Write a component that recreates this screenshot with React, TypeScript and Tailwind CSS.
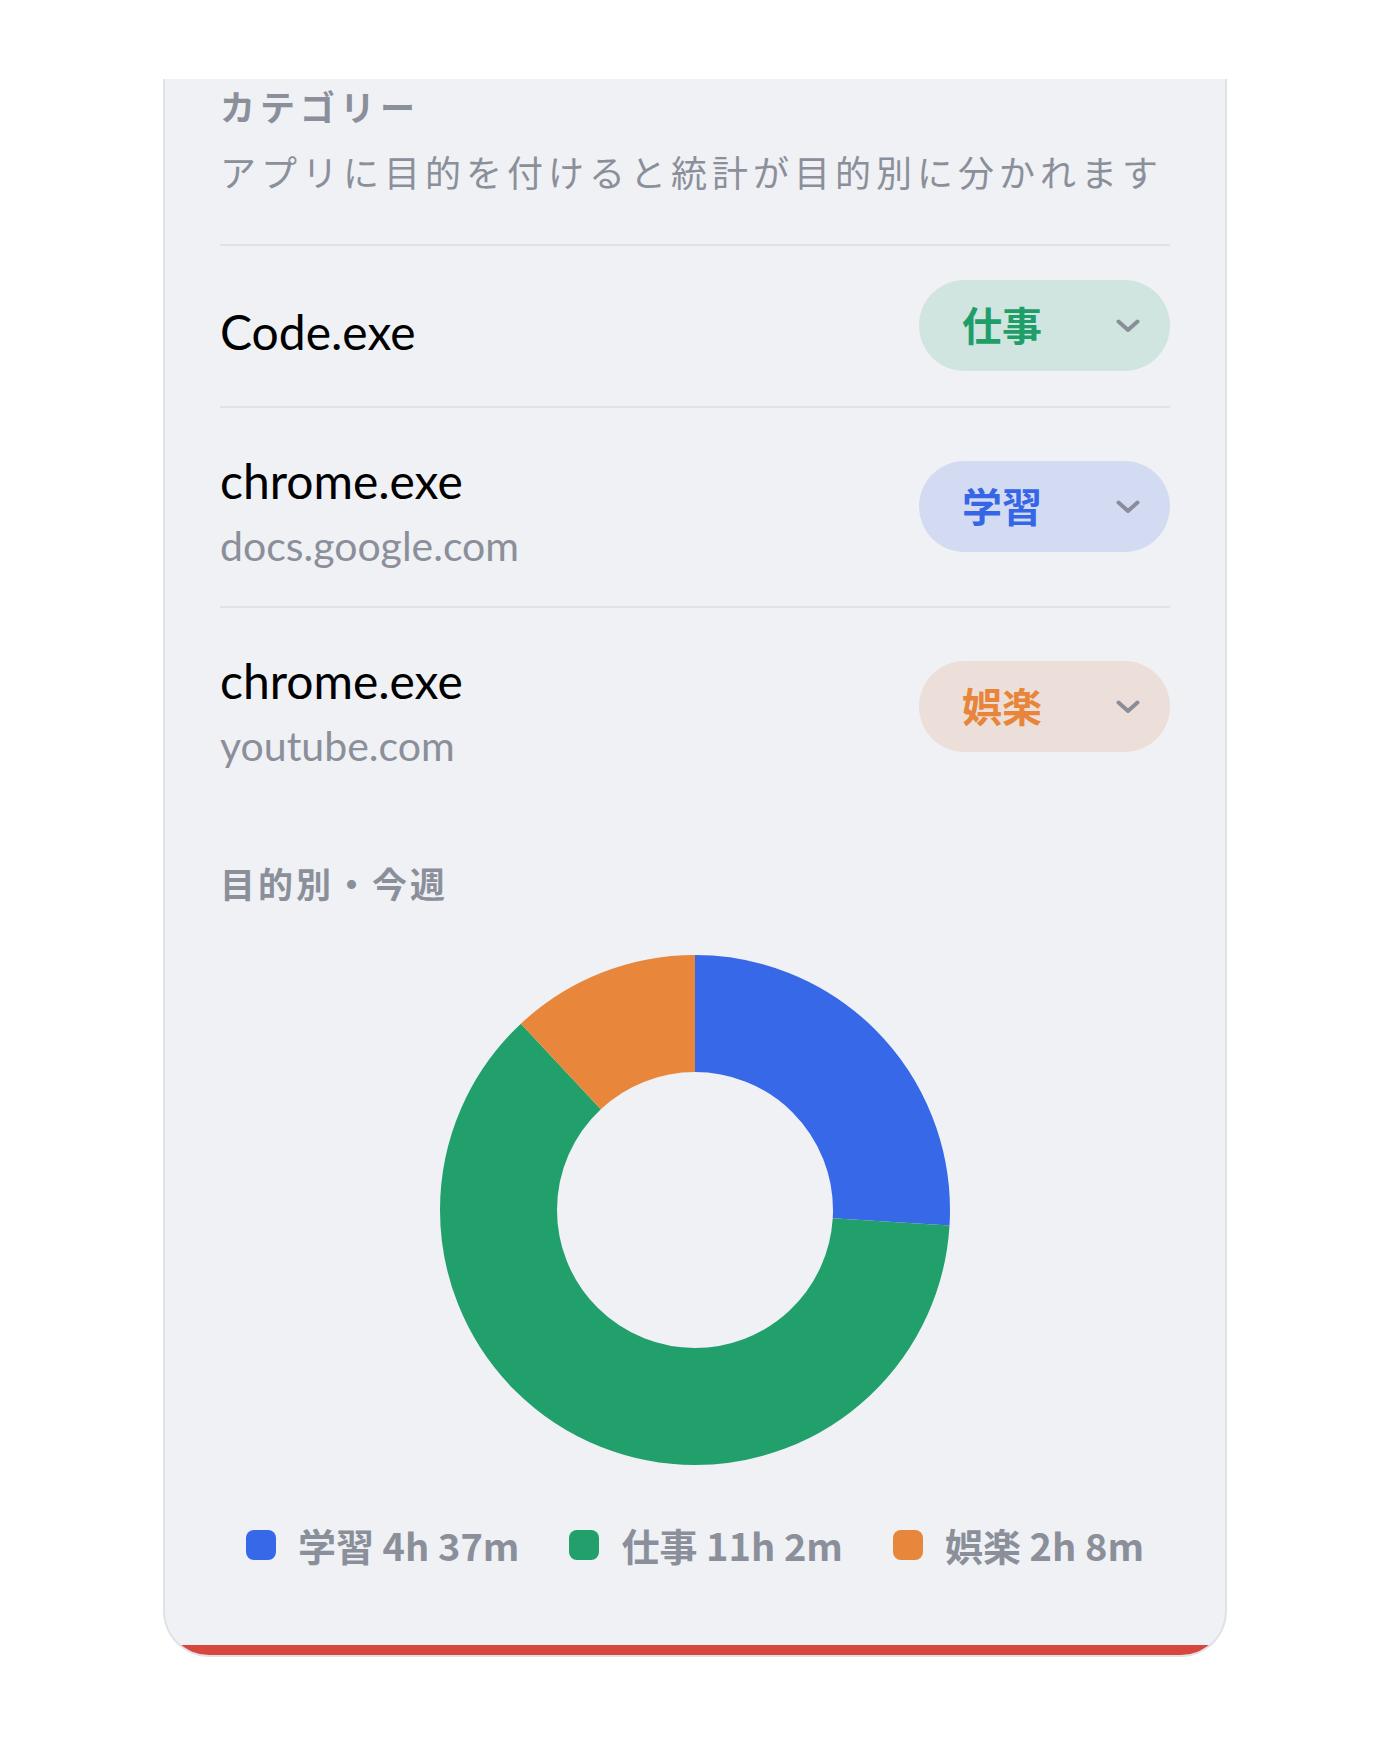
import React from 'react'

// アプリごとの目的
const rows = [
  { app: 'Code.exe', tag: '仕事', text: 'text-[#1f9e6a]', bg: 'bg-[#d0e5df]' },
  { app: 'chrome.exe', domain: 'docs.google.com', tag: '学習', text: 'text-[#3566e6]', bg: 'bg-[#d3dbf3]' },
  { app: 'chrome.exe', domain: 'youtube.com', tag: '娯楽', text: 'text-[#e8853a]', bg: 'bg-[#ecdfd9]' },
]

// 今週の集計 (分)
const stats = [
  { label: '学習', time: '4h 37m', minutes: 277, color: '#3668e8', dot: 'bg-[#3668e8]' },
  { label: '仕事', time: '11h 2m', minutes: 662, color: '#21a06c', dot: 'bg-[#21a06c]' },
  { label: '娯楽', time: '2h 8m', minutes: 128, color: '#e8873b', dot: 'bg-[#e8873b]' },
]

function Chevron() {
  return (
    <svg width="24" height="14" viewBox="0 0 24 14" fill="none">
      <polyline points="2.5,2.5 12,11 21.5,2.5" stroke="#8a8e99" strokeWidth="4" strokeLinecap="round" strokeLinejoin="round" />
    </svg>
  )
}

function Donut() {
  const r = 196.5
  const c = 2 * Math.PI * r
  const total = stats.reduce((s, x) => s + x.minutes, 0)
  let offset = 0
  return (
    <svg width="510" height="510" viewBox="0 0 510 510">
      <g transform="rotate(-90 255 255)">
        {stats.map((s) => {
          const len = (s.minutes / total) * c
          const el = (
            <circle
              key={s.label}
              cx="255"
              cy="255"
              r={r}
              fill="none"
              stroke={s.color}
              strokeWidth="117"
              strokeDasharray={`${len} ${c - len}`}
              strokeDashoffset={-offset}
            />
          )
          offset += len
          return el
        })}
      </g>
    </svg>
  )
}

export default function App() {
  return (
    <div className="min-h-screen bg-white font-[family-name:Lato,'Noto_Sans_CJK_JP',sans-serif]">
      <div className="pt-[79px] mx-[163px]">
        <div className="bg-[#eff1f5] border-x-2 border-b-2 border-[#e0e2e9] rounded-b-[46px] overflow-hidden">
          <div className="px-[55px] pt-[8px]">
            {/* カテゴリー */}
            <h2 className="text-[35px] leading-[40px] font-bold tracking-[5px] text-[#8b8f9a]">カテゴリー</h2>
            <p className="mt-[22px] text-[36px] leading-[48px] tracking-[5px] text-[#8b8f9a] whitespace-nowrap">
              アプリに目的を付けると統計が目的別に分かれます
            </p>

            <div className="mt-[47px]">
              {rows.map((row, i) => (
                <div key={i} className="flex items-center justify-between border-t-2 border-[#e0e2e9] pt-[34px] pb-[35px]">
                  <div className="translate-y-[6px]">
                    <div className="text-[48px] leading-[66px] text-black">{row.app}</div>
                    {row.domain && <div className="text-[41px] leading-[63px] text-[#8b8f9a]">{row.domain}</div>}
                  </div>
                  <div className={`w-[251px] h-[91px] rounded-full flex items-center justify-between pl-[43px] pr-[30px] ${row.bg}`}>
                    <span className={`text-[40px] font-bold ${row.text}`}>{row.tag}</span>
                    <Chevron />
                  </div>
                </div>
              ))}
            </div>

            {/* 目的別・今週 */}
            <h2 className="mt-[58px] text-[35px] leading-[40px] font-bold tracking-[3px] text-[#8b8f9a]">目的別・今週</h2>

            <div className="mt-[51px] flex justify-center">
              <Donut />
            </div>

            <div className="mt-[60px] pb-[80px] flex justify-center items-center gap-x-[50px] font-['Noto_Sans_CJK_JP',sans-serif]">
              {stats.map((s) => (
                <div key={s.label} className="flex items-center gap-[22px]">
                  <span className={`w-[30px] h-[30px] rounded-[8px] ${s.dot}`} />
                  <span className="text-[38px] leading-[40px] font-bold text-[#8b8f9a]">
                    {s.label} {s.time}
                  </span>
                </div>
              ))}
            </div>
          </div>
          <div className="h-[10px] bg-[#d6473d]" />
        </div>
      </div>
    </div>
  )
}
